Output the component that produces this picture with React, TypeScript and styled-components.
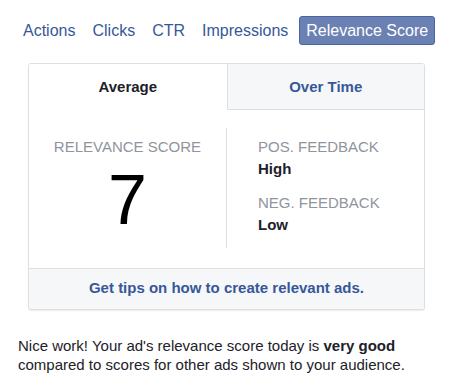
import React, { useState } from "react";
import styled, { createGlobalStyle } from "styled-components";

const Global = createGlobalStyle`
  html, body { margin: 0; padding: 0; background: #ffffff; }
  body { font-family: "Liberation Sans", Arial, Helvetica, sans-serif; -webkit-font-smoothing: antialiased; }
`;

const Page = styled.div`
  width: 458px;
  height: 389px;
  box-sizing: border-box;
  padding: 16px 0 0 0;
`;

const MetricTabs = styled.nav`
  display: flex;
  align-items: center;
  gap: 5px;
  margin-left: 17px;
  height: 29px;
`;

const MetricTab = styled.button<{ $active?: boolean }>`
  font-family: inherit;
  font-size: 16px;
  line-height: 18px;
  height: 29px;
  box-sizing: border-box;
  padding: 0 ${(p) => (p.$active ? "6px" : "5px")};
  margin: 0;
  border-radius: 3px;
  cursor: pointer;
  border: 1px solid ${(p) => (p.$active ? "#4b63a0" : "transparent")};
  background: ${(p) => (p.$active ? "#6b81b3" : "transparent")};
  color: ${(p) => (p.$active ? "#ffffff" : "#365899")};
`;

const Card = styled.section`
  margin: 18px 0 0 28px;
  width: 397px;
  box-sizing: border-box;
  border: 1px solid #dddfe2;
  border-radius: 3px;
  box-shadow: 0 1px 1px rgba(0, 0, 0, 0.08);
  overflow: hidden;
  background: #fff;
`;

const ViewTabs = styled.div`
  display: grid;
  grid-template-columns: 1fr 1fr;
  height: 46px;
`;

const ViewTab = styled.div<{ $active?: boolean }>`
  display: flex;
  align-items: center;
  justify-content: center;
  font-size: 15px;
  font-weight: bold;
  line-height: 18px;
  color: ${(p) => (p.$active ? "#1d2129" : "#365899")};
  background: ${(p) => (p.$active ? "#ffffff" : "#f6f7f9")};
  border-left: ${(p) => (p.$active ? "none" : "1px solid #dddfe2")};
  border-bottom: ${(p) => (p.$active ? "none" : "1px solid #dddfe2")};
  cursor: pointer;
`;

const Body = styled.div`
  display: grid;
  grid-template-columns: 197px 1fr;
  padding: 18px 0 20px;
  height: 158px;
  box-sizing: border-box;
`;

const ScoreCol = styled.div`
  display: flex;
  flex-direction: column;
  align-items: center;
  padding-top: 10px;
`;

const FeedbackCol = styled.div`
  border-left: 1px solid #dddfe2;
  padding: 10px 0 0 31px;
`;

const Label = styled.div<{ $gap?: number }>`
  font-size: 15px;
  line-height: 18px;
  color: #90949c;
  text-transform: uppercase;
  margin-top: ${(p) => p.$gap ?? 0}px;
`;

const Score = styled.div`
  font-size: 70px;
  line-height: 70px;
  color: #000;
  margin-top: 9px;
`;

const Value = styled.div`
  font-size: 15px;
  line-height: 18px;
  font-weight: bold;
  color: #1d2129;
  margin-top: 4px;
`;

const Footer = styled.a`
  display: block;
  border-top: 1px solid #dddfe2;
  background: #f6f7f9;
  padding: 10px 0 12px;
  text-align: center;
  font-size: 15px;
  line-height: 18px;
  font-weight: bold;
  color: #365899;
  text-decoration: none;
`;

const Note = styled.p`
  margin: 26px 0 0 18px;
  width: 420px;
  font-size: 15px;
  line-height: 19px;
  color: #1d2129;
`;

const metrics = ["Actions", "Clicks", "CTR", "Impressions", "Relevance Score"];

export default function App() {
  const [metric, setMetric] = useState("Relevance Score");
  const [view, setView] = useState("Average");
  return (
    <Page>
      <Global />
      <MetricTabs>
        {metrics.map((m) => (
          <MetricTab key={m} $active={m === metric} onClick={() => setMetric(m)}>
            {m}
          </MetricTab>
        ))}
      </MetricTabs>
      <Card>
        <ViewTabs>
          {["Average", "Over Time"].map((v) => (
            <ViewTab key={v} $active={v === view} onClick={() => setView(v)}>
              {v}
            </ViewTab>
          ))}
        </ViewTabs>
        <Body>
          <ScoreCol>
            <Label>Relevance Score</Label>
            <Score>7</Score>
          </ScoreCol>
          <FeedbackCol>
            <Label>Pos. Feedback</Label>
            <Value>High</Value>
            <Label $gap={16}>Neg. Feedback</Label>
            <Value>Low</Value>
          </FeedbackCol>
        </Body>
        <Footer href="#">Get tips on how to create relevant ads.</Footer>
      </Card>
      <Note>
        Nice work! Your ad's relevance score today is <b>very good</b> compared to scores for
        other ads shown to your audience.
      </Note>
    </Page>
  );
}
